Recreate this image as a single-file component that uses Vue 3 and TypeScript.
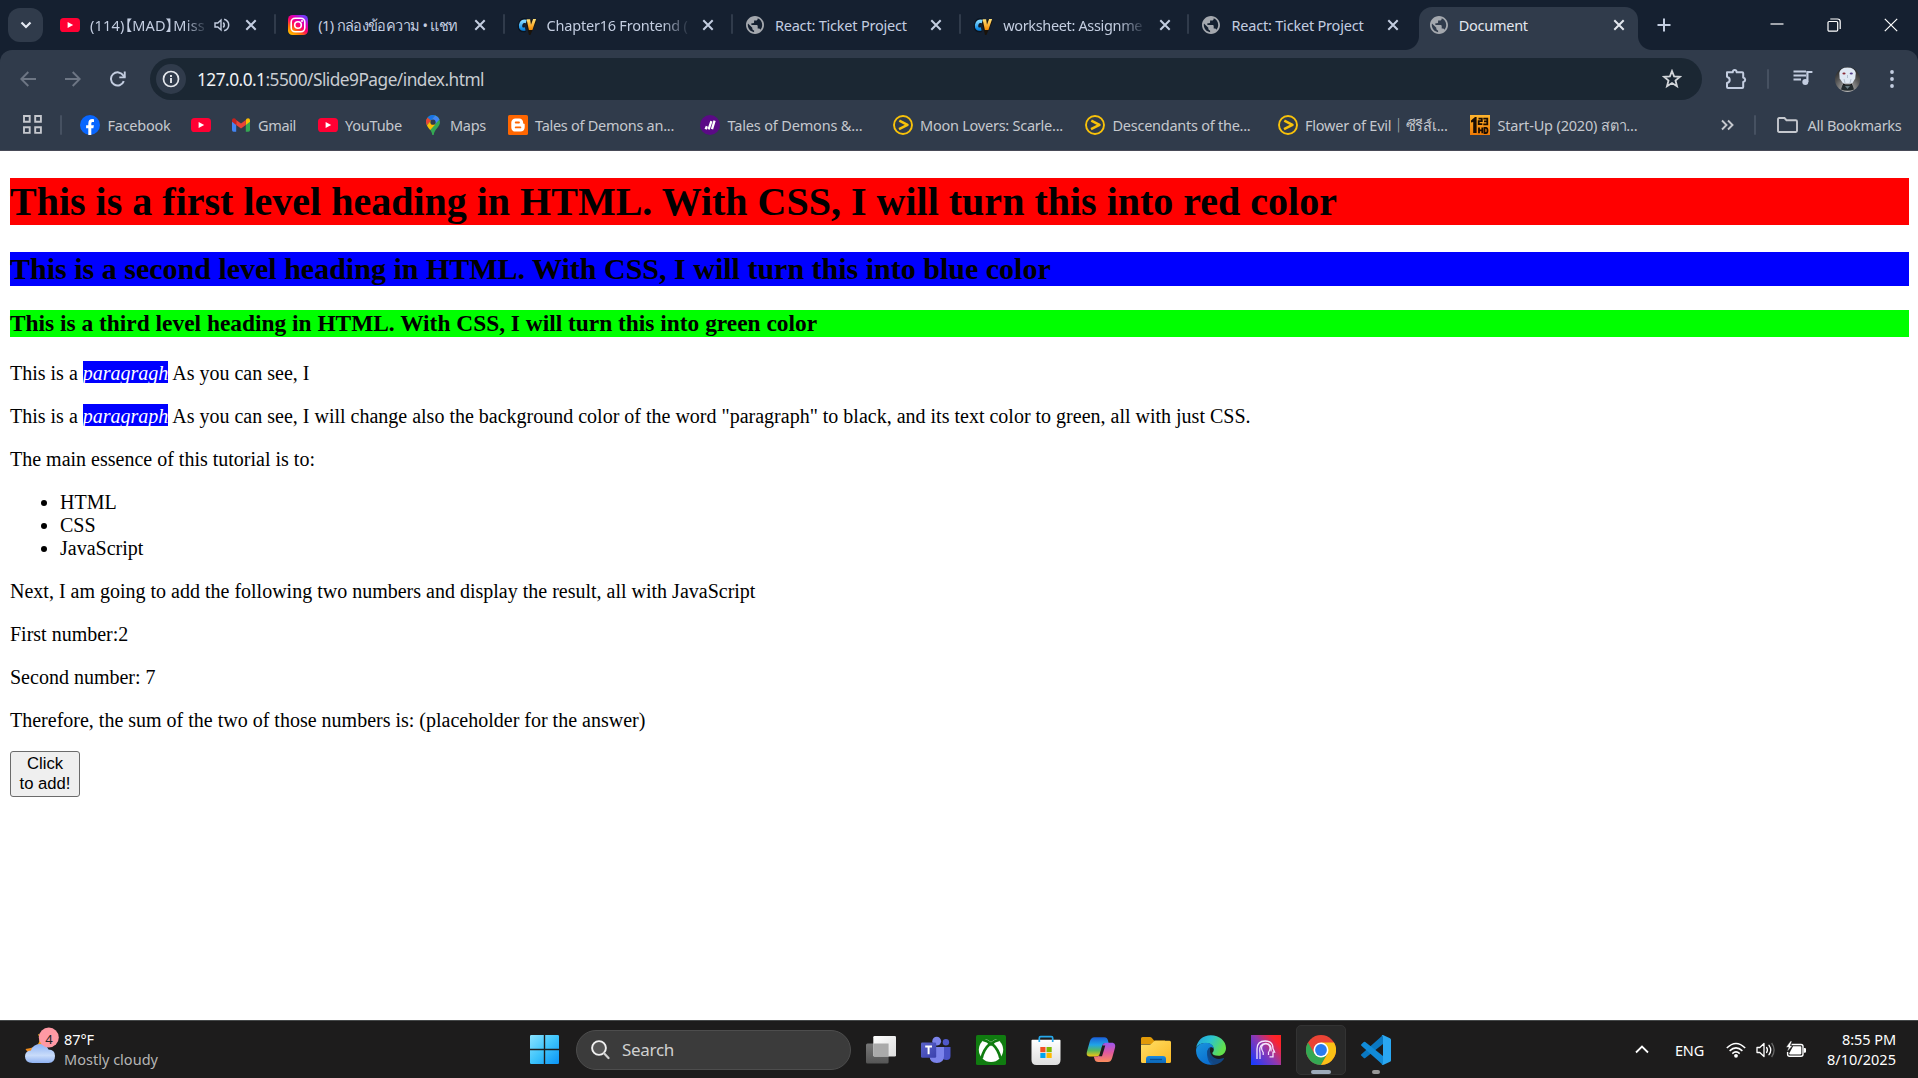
<script setup lang="ts">
import { ref } from 'vue'

interface Tab {
  icon: string
  title: string
  width: number
  audio?: boolean
  active?: boolean
  faded?: boolean
}

interface Bookmark {
  icon: string
  label: string
  width: number
  box: number
}

const tabs: Tab[] = [
  { icon: 'youtube', title: '(114)【MAD】Miss', width: 115, audio: true, faded: true },
  { icon: 'instagram', title: '(1) กล่องข้อความ • แชท', width: 138 },
  { icon: 'cv', title: 'Chapter16 Frontend (', width: 141, faded: true },
  { icon: 'globe', title: 'React: Ticket Project', width: 132 },
  { icon: 'cv', title: 'worksheet: Assignme', width: 139, faded: true },
  { icon: 'globe', title: 'React: Ticket Project', width: 132 },
  { icon: 'globe', title: 'Document', width: 69, active: true },
]

const bookmarks: Bookmark[] = [
  { icon: 'facebook', label: 'Facebook', width: 63, box: 63 },
  { icon: 'youtube', label: '', width: 0, box: 0 },
  { icon: 'gmail', label: 'Gmail', width: 38, box: 39.5 },
  { icon: 'youtube', label: 'YouTube', width: 57, box: 57.5 },
  { icon: 'maps', label: 'Maps', width: 36, box: 37.5 },
  { icon: 'blogger', label: 'Tales of Demons an...', width: 139, box: 145 },
  { icon: 'stripes', label: 'Tales of Demons &...', width: 135, box: 145 },
  { icon: 'viu', label: 'Moon Lovers: Scarle...', width: 143, box: 145 },
  { icon: 'viu', label: 'Descendants of the...', width: 138, box: 145 },
  { icon: 'viu', label: 'Flower of Evil｜ซีรีส์เ...', width: 142, box: 145 },
  { icon: 'hd', label: 'Start-Up (2020) สตา...', width: 140, box: 145 },
]

const apps = ['taskview', 'teams', 'xbox', 'store', 'copilot', 'explorer', 'edge', 'lens', 'chrome', 'vscode']

const first = ref(2)
const second = ref(7)
const answer = ref('(placeholder for the answer)')
const add = () => {
  answer.value = String(first.value + second.value)
}

// Tracks a label's letters so that it fills exactly the given width.
const vFit = {
  mounted(el: HTMLElement, binding: { value: number }) {
    const natural = el.getBoundingClientRect().width
    const count = Array.from(el.textContent ?? '').length
    if (count > 0 && binding.value > 0) {
      el.style.letterSpacing = `${(binding.value - natural) / count}px`
    }
  },
}
</script>

<template>
  <div class="screen">
    <svg class="defs" aria-hidden="true">
      <defs>
        <linearGradient id="gIg" x1="0" y1="1" x2="0.7" y2="0"><stop offset="0" stop-color="#ffd600" /><stop offset=".3" stop-color="#ff7a00" /><stop offset=".55" stop-color="#ff0169" /><stop offset=".8" stop-color="#d300c5" /><stop offset="1" stop-color="#7638fa" /></linearGradient>
        <linearGradient id="gC" x1="0" y1="0" x2="0" y2="1"><stop offset="0" stop-color="#7fd6ff" /><stop offset="1" stop-color="#0a86e0" /></linearGradient>
        <linearGradient id="gV" x1="0" y1="0" x2="0" y2="1"><stop offset="0" stop-color="#ffe27a" /><stop offset="1" stop-color="#f58a00" /></linearGradient>
        <linearGradient id="gHd" x1="0" y1="0" x2="0" y2="1"><stop offset="0" stop-color="#ffb52e" /><stop offset="1" stop-color="#f07a05" /></linearGradient>
        <linearGradient id="gWin" x1="0" y1="0" x2="1" y2="1"><stop offset="0" stop-color="#8be3ff" /><stop offset=".5" stop-color="#3ec4fb" /><stop offset="1" stop-color="#0a93f5" /></linearGradient>
        <linearGradient id="gCloud" x1="0" y1="0" x2="0" y2="1"><stop offset="0" stop-color="#8fb4f5" /><stop offset=".6" stop-color="#c9dcfa" /><stop offset="1" stop-color="#8fb2f2" /></linearGradient>
        <linearGradient id="gMoon" x1="0" y1="0" x2="0" y2="1"><stop offset="0" stop-color="#f5b915" /><stop offset="1" stop-color="#f08020" /></linearGradient>
        <linearGradient id="gTv" x1="0" y1="0" x2="1" y2="1"><stop offset="0" stop-color="#ffffff" /><stop offset="1" stop-color="#dcdcdc" /></linearGradient>
        <linearGradient id="gTb" x1="0" y1="0" x2="0" y2="1"><stop offset="0" stop-color="#777" /><stop offset="1" stop-color="#555" /></linearGradient>
        <linearGradient id="gTeam" x1="0" y1="0" x2="1" y2="1"><stop offset="0" stop-color="#5a62c8" /><stop offset="1" stop-color="#3a41ae" /></linearGradient>
        <linearGradient id="gStore" x1="0" y1="0" x2="0" y2="1"><stop offset="0" stop-color="#ffffff" /><stop offset="1" stop-color="#dedede" /></linearGradient>
        <linearGradient id="gCp1" x1="0" y1="0" x2="0" y2="1"><stop offset="0" stop-color="#1b5fd9" /><stop offset=".4" stop-color="#20a4e8" /><stop offset=".7" stop-color="#58b85c" /><stop offset="1" stop-color="#f2c511" /></linearGradient>
        <linearGradient id="gCp2" x1="0" y1="0" x2="0" y2="1"><stop offset="0" stop-color="#9b55f0" /><stop offset=".5" stop-color="#e0589f" /><stop offset="1" stop-color="#fb8d5c" /></linearGradient>
        <linearGradient id="gFold" x1="0" y1="0" x2="1" y2="1"><stop offset="0" stop-color="#ffdf66" /><stop offset="1" stop-color="#fcb823" /></linearGradient>
        <linearGradient id="gTray" x1="0" y1="0" x2="0" y2="1"><stop offset="0" stop-color="#1c8be0" /><stop offset="1" stop-color="#0b67b8" /></linearGradient>
        <linearGradient id="gE1" x1="0" y1="0" x2="1" y2=".4"><stop offset="0" stop-color="#1f9fe0" /><stop offset=".5" stop-color="#2bc4cf" /><stop offset="1" stop-color="#62e04c" /></linearGradient>
        <linearGradient id="gE2" x1="0" y1="0" x2=".5" y2="1"><stop offset="0" stop-color="#1a95dd" /><stop offset="1" stop-color="#0b6fd0" /></linearGradient>
        <linearGradient id="gLens" x1="0" y1=".9" x2="1" y2=".1"><stop offset="0" stop-color="#1a3bff" /><stop offset=".5" stop-color="#9038b0" /><stop offset=".85" stop-color="#fb2430" /><stop offset="1" stop-color="#ff2222" /></linearGradient>
        <radialGradient id="gAv" cx=".5" cy=".9" r=".9"><stop offset="0" stop-color="#c2c2c2" /><stop offset=".6" stop-color="#555" /><stop offset="1" stop-color="#222" /></radialGradient>
      </defs>

      <symbol id="youtube" viewBox="0 0 20 20"><rect x="0" y="3" width="20" height="14" rx="3.6" fill="#ff0033" /><path d="M7.6 7v6l5.600-3z" fill="#fff" /></symbol>
      <symbol id="instagram" viewBox="0 0 20 20"><rect width="20" height="20" rx="4.6" fill="url(#gIg)" /><rect x="3.2" y="3.2" width="13.6" height="13.6" rx="4" fill="none" stroke="#fff" stroke-width="1.6" /><circle cx="10" cy="10" r="3.3" fill="none" stroke="#fff" stroke-width="1.6" /><circle cx="14" cy="6" r="1" fill="#fff" /></symbol>
      <symbol id="cv" viewBox="0 0 20 20"><path d="M9.3 6.3Q4.6 4.7 3.6 10q-.6 5.600 4.600 4.200" fill="none" stroke="#0b1420" stroke-width="5.6" /><path d="M11.2 5.6l2 8.600 4-9" fill="none" stroke="#1a130a" stroke-width="5" /><path d="M9.3 6.500Q4.6 5.200 3.6 10q-.6 5.200 4.600 3.900" fill="none" stroke="url(#gC)" stroke-width="3.4" /><path d="M9.6 4.300h3.500l.9 5.400 2.100-5.600h3L15.400 15h-3.500z" fill="url(#gV)" /></symbol>
      <symbol id="globe" viewBox="0 0 20 20"><path transform="translate(-.8 -.8) scale(.9)" d="M12 2C6.480 2 2 6.480 2 12s4.480 10 10 10 10-4.480 10-10S17.520 2 12 2zm-1 17.930c-3.950-.49-7-3.850-7-7.930 0-.62.08-1.210.21-1.790L9 15v1c0 1.100.9 2 2 2v1.930zm6.900-2.540c-.26-.81-1-1.390-1.900-1.390h-1v-3c0-.55-.45-1-1-1H8v-2h2c.55 0 1-.45 1-1V7h2c1.100 0 2-.9 2-2v-.41c2.930 1.190 5 4.060 5 7.410 0 2.080-.8 3.970-2.100 5.390z" fill="#a4a8ae" /></symbol>
      <symbol id="x" viewBox="0 0 12 12"><path d="M1.300 1.300l9.400 9.400M10.700 1.300l-9.400 9.400" stroke="currentColor" stroke-width="2" /></symbol>
      <symbol id="audio" viewBox="0 0 16 14"><path d="M1 5v4h2.800L7 12V2L3.800 5z" fill="none" stroke="currentColor" stroke-width="1.400" /><path d="M9.300 4.500q2 2.500 0 5M10.200 1.200q4.500 1.500 4.500 5.800t-4.500 5.800" fill="none" stroke="currentColor" stroke-width="1.500" /></symbol>
      <symbol id="facebook" viewBox="0 0 20 20"><circle cx="10" cy="10" r="10" fill="#0866ff" /><path d="M8.300 20v-6.700H6.100v-3h2.200V8.700c0-3.300 1.600-4.600 4-4.600q1 0 1.700.2v2.800h-1.200c-1.200 0-1.500.6-1.500 1.700v1.500h2.600l-.5 3h-2.100V20z" fill="#fff" /></symbol>
      <symbol id="gmail" viewBox="0 0 20 20"><path d="M1 5.500V15q0 1.700 1.600 1.700h2.600V8.600z" fill="#4285f4" /><path d="M19 5.500V15q0 1.700-1.600 1.700h-2.600V8.600z" fill="#34a853" /><path d="M14.800 5v5L19 6.800V5.300c0-2-2-2.700-3.400-1.600z" fill="#fbbc04" /><path d="M5.200 10V5L10 8.500 14.800 5v5L10 13.600z" fill="#ea4335" /><path d="M1 5.300v1.500L5.200 10V5l-.8-1.300C3 2.600 1 3.300 1 5.300z" fill="#c5221f" /></symbol>
      <symbol id="maps" viewBox="0 0 20 20"><path d="M3 7a7 7 0 0 1 14 0c0 5-5.600 7-6.300 13H9.300C8.800 14 3 12 3 7z" fill="#34a853" /><path d="M4.600 2.600L8 5.600 4 10.500Q3 9 3 7q0-2.600 1.600-4.400z" fill="#ea4335" /><path d="M4.600 2.600A7 7 0 0 1 12.300.4L8 5.600z" fill="#1a73e8" /><path d="M12.300.4q3 1 4.200 4L12 9.300 8 5.600z" fill="#4285f4" /><path d="M4 10.500l4-4.900 4.200 3.800-5 5.700Q5 12.600 4 10.500z" fill="#fbbc04" /><circle cx="10" cy="7.200" r="2.600" fill="#303b4b" /></symbol>
      <symbol id="blogger" viewBox="0 0 20 20"><rect width="20" height="20" rx="1.600" fill="#ff6600" /><path d="M7.500 3.400h3.600c2.600 0 4 1.800 4 4 0 1 .3 1.200 1 1.300.5.100.6.500.6 1v2.600c0 2.600-1.800 4.300-4.200 4.300H7.500c-2.500 0-4.200-1.700-4.200-4.200V7.600c0-2.500 1.700-4.200 4.200-4.200z" fill="#fff" /><path d="M7.700 7.500H11M7.700 12.400h4.700" stroke="#ff6600" stroke-width="1.800" stroke-linecap="round" /></symbol>
      <symbol id="stripes" viewBox="0 0 20 20"><circle cx="10" cy="10" r="10" fill="#5b0a86" /><path d="M5.600 14.200l1.300-3M8.600 14.400l2.800-8.200M12 14.200l2.600-8.600" stroke="#fff" stroke-width="2.300" /></symbol>
      <symbol id="viu" viewBox="0 0 20 20"><circle cx="10" cy="10" r="9" fill="none" stroke="#f8c20a" stroke-width="1.900" /><path d="M6.300 5.600l8.200 4.300-8.500 4.300" fill="none" stroke="#f8c20a" stroke-width="2.500" stroke-linejoin="round" /></symbol>
      <symbol id="hd" viewBox="0 0 20 20"><rect width="20" height="20" fill="url(#gHd)" /><path d="M1 5.500L5 2h1.600v16H3.200V7L1 7.500z" fill="#1a0d02" /><path d="M8.500 3.600h3.300v2.600H8.700v3h3.600M13.300 3.600h4v5.700h-4M14 6.300h3M9 12.500v5.700M12.300 12.500v5.700M9 15.300h3.300M14.500 12.800v5.200h1.500q1.500 0 1.500-2.600t-1.500-2.600z" fill="none" stroke="#1a0d02" stroke-width="1.800" /></symbol>

      <symbol id="taskview" viewBox="0 0 30 30"><rect y="8.600" width="22.600" height="20" rx="1.500" fill="url(#gTb)" /><rect x="7.300" y="1" width="22.700" height="20.600" rx="1.300" fill="url(#gTv)" /><path d="M7.300 8.600h15.300v13H8.600q-1.300 0-1.300-1.300z" fill="#aaa" /></symbol>
      <symbol id="teams" viewBox="0 0 30 30"><circle cx="24.900" cy="7.300" r="3.200" fill="#4f58c9" /><path d="M21 12h8.500v9q0 4-4 4t-4.500-3z" fill="#4a53c5" /><circle cx="15.700" cy="6.200" r="4.400" fill="#7b83eb" /><path d="M8 12h15v9q0 7-7.200 7T8.600 21z" fill="#7b83eb" /><rect x="0" y="7.500" width="15.200" height="15.200" rx="1.300" fill="url(#gTeam)" /><path d="M4.200 11.500h6.800M7.600 11.500v7.800" stroke="#fff" stroke-width="2" /></symbol>
      <symbol id="xbox" viewBox="0 0 30 30"><rect width="30" height="30" rx="1.600" fill="#107c10" /><circle cx="15" cy="14.800" r="12.200" fill="#fff" /><path d="M8 3.800Q11.500 4 15 7q3.500-3 7-3.200L19 1.500h-8z" fill="#107c10" /><path d="M7 5q4.500.5 8 4.200Q18.500 5.500 23 5M14 8.800Q7.500 14.500 5.600 23.500M16 8.800Q22.500 14.500 24.400 23.500" fill="none" stroke="#107c10" stroke-width="2.700" /></symbol>
      <symbol id="store" viewBox="0 0 30 30"><path d="M.5 5.600q0-.8.8-.8h27.400q.8 0 .8.800V25q0 5-5 5h-19q-5 0-5-5z" fill="url(#gStore)" /><path d="M8.300 7V3q0-1.400 1.400-1.400h10.600Q21.700 1.600 21.700 3v4" fill="none" stroke="#27a8ea" stroke-width="1.700" /><path d="M9.300 12h5.200v5.200H9.300z" fill="#f25022" /><path d="M15.500 12h5.200v5.200h-5.200z" fill="#7fba00" /><path d="M9.300 18h5.200v5H9.300z" fill="#00a4ef" /><path d="M15.500 18h5.200v5h-5.200z" fill="#ffb900" /></symbol>
      <symbol id="copilot" viewBox="0 0 30 30"><path d="M8.500 2.200h9.700c2.600 0 3.300 1.600 3.800 3.300l.6 2.500h-3c-2.200 0-3 1.500-3.500 3.400l-1.600 6.300c-.7 2.600-2 3.700-4.500 3.700H3.500C.8 21.400.3 19 1 16.500L3.700 6.800c.9-3 2.200-4.600 4.800-4.600z" fill="url(#gCp1)" /><path d="M21.500 27h-9c-2.600 0-3.500-1.200-4-3l-.7-2.600h3c2 0 3-1.200 3.500-3l1.900-7c.7-2.500 1.900-3.600 4.300-3.600h5.300c3 0 3.900 2.200 3.200 4.900l-2.700 9.700c-.9 3-2 4.600-4.800 4.600z" fill="url(#gCp2)" /><path d="M16.300 10.500h3L16 21.300h-3z" fill="#1d1c1c" /></symbol>
      <symbol id="explorer" viewBox="0 0 30 30"><path d="M0 3.500Q0 2 1.500 2H9q1 0 1.700.8L13 5.500h11V9H0z" fill="#e19a08" /><path d="M0 9.500h8.500q1.300 0 2.300-1l1.700-1.700q1-1 2.200-1H28.500q1.500 0 1.500 1.500v19.200q0 1.500-1.500 1.500h-27q-1.500 0-1.500-1.500z" fill="url(#gFold)" /><path d="M5 28v-4q0-3 3-3h14q3 0 3 3v4z" fill="url(#gTray)" /><path d="M9 24.500h12" stroke="#074f96" stroke-width="1.300" /></symbol>
      <symbol id="edge" viewBox="0 0 30 30"><path d="M.2 13C1 5.500 7 .2 14.800.2 23.500.2 30 6 30 13c0 5-3.800 7.800-7.700 7.800-4 0-6-1.300-6-2.700 0-.8 1.500-1.200 1.500-3.900 0-3.200-3-6.200-8-6.200C5.500 8 1.500 9.500.2 13z" fill="url(#gE1)" /><path d="M.1 14.600C.5 10.500 5 7.700 9.800 7.700c5.500 0 8 3.500 8 6.300-.8-1.500-2.500-2-3.800-1.400-3.300 1.500-4 9.700 2 14 1.300 1 .6 3.200-1.200 3.200C6.600 29.800-.6 23.500.1 14.600z" fill="url(#gE2)" /><path d="M11 18c0-3 1.500-5 3.500-5.800-2 6 2.500 11.800 8.500 11.800 2 0 3.700-.8 4.300-1 .6-.1.800.4.500.9-2.300 3.600-6.700 6-11.800 6-3.200-2-5-6.500-5-11.900z" fill="#114a8b" opacity=".92" /></symbol>
      <symbol id="lens" viewBox="0 0 30 30"><path d="M0 0h30v30H0z" fill="url(#gLens)" /><path d="M6 24V14q0-8 8.300-8 7.700 0 7.700 7.500l1.600 3.700H22v4.600h-3.500" fill="none" stroke="#f3e4ff" stroke-width="1.300" /><path d="M9 24v-6.200M12.200 20v-2.500q-3.400-5.300.2-8 3-1.500 5.400.6 2.600 3-.3 7.400V20M9 18q-1.500-9.300 6-9.700 6 .4 5 8" fill="none" stroke="#f3e4ff" stroke-width="1.200" /></symbol>
      <symbol id="chrome" viewBox="0 0 30 30"><circle cx="15" cy="15" r="15" fill="#ea4335" /><path d="M2 7.500l6.500 11.250L15 15l6.500 3.750L15 30A15 15 0 0 1 2 7.500z" fill="#34a853" /><path d="M15 7.500h13A15 15 0 0 1 15 30l6.500-11.250z" fill="#fbc116" /><circle cx="15" cy="15" r="7.500" fill="#fff" /><circle cx="15" cy="15" r="5.900" fill="#2a7bf0" /></symbol>
      <symbol id="vscode" viewBox="0 0 30 30"><path d="M22 0v9L4.300 23q-.8.600-1.500 0L.4 20.800q-.8-.8 0-1.500z" fill="#0a78c2" /><path d="M22 30v-9L4.300 7q-.8-.6-1.500 0L.4 9.200q-.8.800 0 1.500z" fill="#118bd8" /><path d="M22 0l7 3.200q1 .5 1 1.500v20.600q0 1-1 1.500L22 30q-1 .2-1.500-.5 1.500.5 1.500-1.500V2q0-1.800-1.500-1.500Q21-.2 22 0z" fill="#2aa7f2" /></symbol>
      <symbol id="wifi" viewBox="0 0 20 16"><path d="M.8 6Q10-3 19.200 6M3.600 8.900q6.400-6 12.800 0M6.300 11.600q3.700-3.400 7.400 0" fill="none" stroke="#fff" stroke-width="1.500" /><circle cx="10" cy="13.800" r="1.900" fill="#fff" /></symbol>
      <symbol id="volume" viewBox="0 0 20 16"><path d="M1 5.500v5h2.800L8 14.500v-13L3.800 5.500z" fill="none" stroke="#fff" stroke-width="1.300" stroke-linejoin="round" /><path d="M10.600 5.500q1.800 2.500 0 5M13 3.300q3.500 4.700 0 9.400" fill="none" stroke="#fff" stroke-width="1.300" stroke-linecap="round" /><path d="M15.600 1q5 7 0 14" fill="none" stroke="#666" stroke-width="1.300" /></symbol>
      <symbol id="battery" viewBox="0 0 20 17"><path d="M5.500 3.500H15q2 0 2 2v7.700q0 2-2 2H3.600q-2 0-2-2V11" fill="none" stroke="#fff" stroke-width="1.400" /><path d="M7 5.300h7.500q.8 0 .8.800v6.500q0 .8-.8.800H4q-.8 0-.8-.8z" fill="#fff" /><path d="M17.800 7h1q1.200 0 1.200 1v2.700q0 1-1.200 1h-1z" fill="#fff" /><path d="M4.500 0L0 6.300h2.500L1 11l5.500-6.300H4.300L6 0z" fill="#fff" stroke="#1d1c1c" stroke-width=".5" /></symbol>
    </svg>

    <header class="strip">
      <div class="menu"><svg width="12" height="8" viewBox="0 0 12 8"><path d="M1.500 1.500L6 6l4.500-4.500" fill="none" stroke="#e4e9f2" stroke-width="2.200" /></svg></div>
      <div class="tabs">
        <div v-for="(tab, i) in tabs" :key="i" class="tab" :class="{ active: tab.active, bare: i >= 5 }">
          <svg class="fav"><use :href="'#' + tab.icon" /></svg>
          <div class="title" :class="{ faded: tab.faded, short: tab.audio }"><span v-fit="tab.width">{{ tab.title }}</span></div>
          <svg v-if="tab.audio" class="audio"><use href="#audio" /></svg>
          <svg class="close"><use href="#x" /></svg>
        </div>
      </div>
      <svg class="plus" width="14" height="14" viewBox="0 0 14 14"><path d="M7 .5v13M.5 7h13" stroke="#c3cde0" stroke-width="2" /></svg>
      <div class="window">
        <svg width="14" height="14" viewBox="0 0 14 14"><path d="M.5 6h13" stroke="#fff" stroke-width="1.200" /></svg>
        <svg width="14" height="14" viewBox="0 0 14 14"><rect x="1" y="3.500" width="9.700" height="9.700" rx="1.200" fill="none" stroke="#fff" stroke-width="1.200" /><path d="M3.300 1h7.200Q13.200 1 13.200 3.700V11" fill="none" stroke="#fff" stroke-width="1.200" /></svg>
        <svg width="14" height="14" viewBox="0 0 14 14"><path d="M.8.8l12.400 12.400M13.200.8L.8 13.200" stroke="#fff" stroke-width="1.200" /></svg>
      </div>
    </header>

    <div class="toolbar">
      <svg class="nav dim" viewBox="0 0 16 16"><path d="M16 8H1.500M8.300 1L1.300 8l7 7" fill="none" stroke="currentColor" stroke-width="1.900" /></svg>
      <svg class="nav dim" viewBox="0 0 16 16"><path d="M0 8h14.500M7.700 1l7 7-7 7" fill="none" stroke="currentColor" stroke-width="1.900" /></svg>
      <svg class="nav" viewBox="0 0 16 16"><path d="M13.800 10.200A6.600 6.600 0 1 1 13.300 4.600L14.800 6.200" fill="none" stroke="currentColor" stroke-width="2" /><path d="M15.700.5v6.700H9.300V5.400h4.500V.5z" fill="currentColor" /></svg>
      <div class="omnibox">
        <div class="info"><svg width="18" height="18" viewBox="0 0 18 18"><circle cx="9" cy="9" r="7.500" fill="none" stroke="#e3e6eb" stroke-width="1.700" /><path d="M9 8v5M9 5v1.900" stroke="#e3e6eb" stroke-width="1.900" /></svg></div>
        <span v-fit="287" class="url"><b>127.0.0.1</b>:5500/Slide9Page/index.html</span>
        <svg class="star" width="20" height="20" viewBox="0 0 20 20"><path d="M10 2l2.100 5.400 5.900.4-4.500 3.700 1.500 5.700-5-3.200-5 3.200 1.500-5.700L2 7.800l5.900-.4z" fill="none" stroke="#d3d6da" stroke-width="1.800" /></svg>
      </div>
      <svg class="ext" width="22" height="22" viewBox="0 0 22 22"><path d="M2 4.300h5.700q.3-2.300 2-2.300t2 2.300h5.500q1 0 1 1V9.500q2 .5 2 2.200t-2 2.200v5q0 1-1 1H3q-1 0-1-1v-4q2.700-.7 2.700-3T2 8.700z" fill="none" stroke="#c3cde0" stroke-width="2" stroke-linejoin="round" /></svg>
      <i class="bar" />
      <svg class="media" width="20" height="16" viewBox="0 0 20 16"><path d="M.5 1.500h12.500M.5 5.500h12.500M.5 9.500h7.500" stroke="#c3cde0" stroke-width="1.800" /><circle cx="12.300" cy="12" r="3" fill="#c3cde0" /><path d="M14.400 12V2h5" fill="none" stroke="#c3cde0" stroke-width="2.200" /></svg>
      <svg class="avatar" width="25" height="25" viewBox="0 0 25 25"><circle cx="12.500" cy="12.500" r="12.500" fill="url(#gAv)" /><path d="M4.300 6Q5 .4 12.500.4T20.800 6l-.6 5.500-3 5h-9l-3.500-5z" fill="#dfe8f3" /><path d="M8 16.500l2.500 1h4.500l2-1v3H8z" fill="#111" /><path d="M7.500 18h10l1.500 4.500q-6.500 2.500-13 0z" fill="#222a2d" /><path d="M10 19h5l-2.500 3z" fill="#697b80" /><ellipse cx="9" cy="6.500" rx="1.600" ry="1" fill="#8b2d38" /><ellipse cx="16.300" cy="6.500" rx="1.600" ry="1" fill="#554088" /><path d="M9 12l1 4M16 12l-1 4M12.500 8v3" stroke="#a5b2c3" stroke-width=".8" /></svg>
      <svg class="dots" width="4" height="18" viewBox="0 0 4 18"><circle cx="2" cy="2" r="1.900" fill="#c3cde0" /><circle cx="2" cy="9" r="1.900" fill="#c3cde0" /><circle cx="2" cy="16" r="1.900" fill="#c3cde0" /></svg>
    </div>

    <nav class="bookmarks">
      <svg class="grid" width="19" height="19" viewBox="0 0 19 19"><path d="M1 1h5.700v5.700H1zM12.200 1h5.700v5.700h-5.700zM1 12.200h5.700v5.700H1zM12.200 12.200h5.700v5.700h-5.700z" fill="none" stroke="#c5c8ce" stroke-width="1.900" /></svg>
      <i class="bar first" />
      <div v-for="(mark, i) in bookmarks" :key="i" class="mark">
        <svg class="fav"><use :href="'#' + mark.icon" /></svg>
        <div v-if="mark.label" class="label" :style="{ width: mark.box + 'px' }"><span v-fit="mark.width">{{ mark.label }}</span></div>
      </div>
      <svg class="more" width="13" height="12" viewBox="0 0 13 12"><path d="M1 1.500L5.500 6 1 10.500M7 1.500L11.500 6 7 10.500" fill="none" stroke="#c5c8ce" stroke-width="1.900" /></svg>
      <i class="bar last" />
      <svg class="folder" width="21" height="16" viewBox="0 0 21 16"><path d="M1 2.200Q1 1 2.200 1h5.300l2 2.200h9.300q1.200 0 1.200 1.200v9.400q0 1.200-1.200 1.200H2.200Q1 15 1 13.800z" fill="none" stroke="#c5c8ce" stroke-width="1.900" /></svg>
      <span v-fit="94" class="all">All Bookmarks</span>
    </nav>

    <main class="page">
      <h1><span v-fit="1327">This is a first level heading in HTML. With CSS, I will turn this into red color</span></h1>
      <h2>This is a second level heading in HTML. With CSS, I will turn this into blue color</h2>
      <h3>This is a third level heading in HTML. With CSS, I will turn this into green color</h3>
      <p>This is a <em>paragragh</em> As you can see, I</p>
      <p>This is a <em>paragraph</em> As you can see, I will change also the background color of the word "paragraph" to black, and its text color to green, all with just CSS.</p>
      <p>The main essence of this tutorial is to:</p>
      <ul>
        <li>HTML</li>
        <li>CSS</li>
        <li>JavaScript</li>
      </ul>
      <p>Next, I am going to add the following two numbers and display the result, all with JavaScript</p>
      <p>First number:{{ first }}</p>
      <p>Second number: {{ second }}</p>
      <p>Therefore, the sum of the two of those numbers is: {{ answer }}</p>
      <button type="button" @click="add">Click<br>to add!</button>
    </main>

    <footer class="taskbar">
      <div class="weather">
        <svg width="36" height="40" viewBox="0 0 36 40"><path d="M13 8q6 13-12.500 15Q4 30 14 27q10-5 5-14-2-4-6-5z" fill="url(#gMoon)" /><path d="M7.500 37Q0 36.500 0 30.500 0 25 6 24.500 8 18 15 18q6 0 8.500 5.500 6.500 0 6.500 6.500t-6.500 7z" fill="url(#gCloud)" /><circle cx="23.800" cy="11.500" r="10" fill="#ff99a4" /></svg>
        <b class="badge">4</b>
        <div class="forecast"><span v-fit="30" class="temp">87°F</span><span v-fit="94">Mostly cloudy</span></div>
      </div>
      <div class="center">
        <svg class="start" width="29" height="29" viewBox="0 0 29 29"><path d="M1.200 0H13.800V13.800H0V1.200Q0 0 1.200 0zM15.200 0h12.600Q29 0 29 1.200v12.600H15.200zM0 15.200h13.800V29H1.200Q0 29 0 27.800zM15.200 15.200H29v12.600q0 1.200-1.200 1.200H15.200z" fill="url(#gWin)" /></svg>
        <div class="search">
          <svg width="19" height="20" viewBox="0 0 19 20"><circle cx="8" cy="8" r="6.900" fill="#555" stroke="#f0f0f0" stroke-width="1.900" /><path d="M13 13.200l4.500 4.800" stroke="#d0d0d0" stroke-width="2.200" stroke-linecap="round" /></svg>
          <span v-fit="52">Search</span>
        </div>
        <div v-for="app in apps" :key="app" class="app" :class="app">
          <svg width="30" height="30"><use :href="'#' + app" /></svg>
        </div>
      </div>
      <div class="tray">
        <svg class="up" width="14" height="9" viewBox="0 0 14 9"><path d="M1 7.500L7 1.500l6 6" fill="none" stroke="#fff" stroke-width="1.800" /></svg>
        <span v-fit="29" class="lang">ENG</span>
        <svg class="wifi" width="20" height="16"><use href="#wifi" /></svg>
        <svg class="volume" width="20" height="16"><use href="#volume" /></svg>
        <svg class="battery" width="20" height="17"><use href="#battery" /></svg>
        <div class="clock"><span v-fit="54">8:55 PM</span><span v-fit="69">8/10/2025</span></div>
      </div>
    </footer>
  </div>
</template>

<style>
body {
  margin: 0;
  overflow: hidden;
}
</style>

<style scoped>
.screen {
  display: flex;
  flex-direction: column;
  width: 1918px;
  height: 1078px;
  overflow: hidden;
  background: #fff;
  font-family: "Noto Sans", "Open Sans", "Noto Sans CJK SC", sans-serif;
  font-size: 14.5px;
}
svg {
  display: block;
  flex: none;
}
.defs {
  position: absolute;
  width: 0;
  height: 0;
}
span {
  white-space: nowrap;
}
.strip {
  position: relative;
  z-index: 1;
  display: flex;
  flex: none;
  height: 50px;
  background: #152030;
  color: #c3cde0;
}
.menu {
  display: flex;
  align-items: center;
  justify-content: center;
  width: 35px;
  height: 34px;
  margin: 8px 4px 0 8px;
  border-radius: 12px;
  background: #303b4b;
}
.tabs {
  display: flex;
  width: 1598px;
  height: 50px;
}
.tab {
  position: relative;
  display: flex;
  align-items: center;
  width: 228.3px;
  height: 43px;
  margin-top: 7px;
  padding: 0 0 7px 13px;
  box-sizing: border-box;
}
.tab::after {
  content: "";
  position: absolute;
  right: -1px;
  top: 7px;
  width: 2px;
  height: 20px;
  border-radius: 1px;
  background: #303b4b;
}
.tab.bare::after {
  display: none;
}
.tab.active {
  width: 219px;
  margin-left: 2px;
  padding-left: 10px;
  border-radius: 13px 13px 0 0;
  background: #303b4b;
  color: #e3e7ee;
}
.tab.active::before,
.tab.active::after {
  content: "";
  display: block;
  position: absolute;
  top: auto;
  bottom: 0;
  width: 14px;
  height: 14px;
  border-radius: 0;
}
.tab.active::before {
  left: -14px;
  background: radial-gradient(circle at 0 0, transparent 13.5px, #303b4b 14.5px);
}
.tab.active::after {
  right: -14px;
  background: radial-gradient(circle at 100% 0, transparent 13.5px, #303b4b 14.5px);
}
.fav {
  width: 20px;
  height: 20px;
}
.title {
  width: 141px;
  margin-left: 10px;
  overflow: hidden;
  line-height: 24px;
  font-feature-settings: "palt";
}
.title span,
.label span {
  display: inline-block;
}
.title.short {
  width: 116px;
}
.title.faded {
  mask-image: linear-gradient(90deg, #000 82%, transparent 102%);
}
.audio {
  width: 16px;
  height: 14px;
  margin-left: 8px;
}
.close {
  width: 12px;
  height: 12px;
  margin-left: 14.5px;
}
.audio + .close {
  margin-left: 15px;
}
.active .close {
  margin-left: 13px;
}
.plus {
  margin: 18px 0 0 12px;
}
.window {
  display: flex;
  gap: 43px;
  margin: 18px 0 0 99px;
}
.toolbar {
  display: flex;
  flex: none;
  align-items: center;
  height: 50px;
  padding-top: 8px;
  padding-left: 20px;
  box-sizing: border-box;
  border-radius: 12px 12px 0 0;
  background: #303b4b;
  box-shadow: 0 -12px 0 12px #152030;
  color: #c3cde0;
}
.nav {
  width: 16px;
  height: 16px;
  margin-right: 29px;
}
.nav.dim {
  color: #6d7684;
}
.omnibox {
  display: flex;
  align-items: center;
  width: 1552px;
  height: 42px;
  margin-left: -5px;
  border-radius: 21px;
  background: #1b2733;
}
.info {
  display: flex;
  align-items: center;
  justify-content: center;
  width: 30px;
  height: 30px;
  margin-left: 6px;
  border-radius: 50%;
  background: #303b4b;
}
.url {
  margin-left: 11px;
  color: #c8ccd1;
  font-size: 17.3px;
}
.url b {
  color: #f0f2f5;
  font-weight: 400;
}
.star {
  margin-left: auto;
  margin-right: 20px;
}
.ext {
  margin-left: 23px;
}
.bar {
  flex: none;
  width: 2px;
  height: 20px;
  border-radius: 1px;
  background: #465161;
}
.ext + .bar {
  margin-left: 20px;
}
.media {
  margin: -2px 0 0 24px;
}
.avatar {
  margin-left: 22px;
}
.dots {
  margin-left: 30px;
}
.bookmarks {
  display: flex;
  flex: none;
  align-items: center;
  height: 51px;
  padding: 0 0 1px 23px;
  box-sizing: border-box;
  border-bottom: 1px solid #474a57;
  background: #303b4b;
  color: #c5c8ce;
}
.bar.first {
  margin: 0 18px 0 18px;
}
.mark {
  display: flex;
  align-items: center;
  margin-right: 20px;
}
.label {
  margin-left: 7.5px;
  line-height: 24px;
}
.more {
  margin-left: 58px;
}
.bar.last {
  margin-left: 20px;
}
.folder {
  margin-left: 21px;
}
.all {
  margin-left: 10px;
}
.page {
  flex: none;
  height: 869px;
  padding: 27px 9px 0 10px;
  box-sizing: border-box;
  background: #fff;
  color: #000;
  font: 20px/23px "Liberation Serif", "Times New Roman", serif;
}
h1 {
  margin: 0 0 27px;
  background: #f00;
  font-size: 40px;
  line-height: 47px;
}
h2 {
  margin: 0 0 24px;
  background: #00f;
  font-size: 30px;
  line-height: 34px;
}
h3 {
  margin: 0 0 25px;
  background: #0f0;
  font-size: 23.4px;
  line-height: 27px;
}
p {
  margin: 0 0 20px;
}
em {
  padding-top: 1px;
  background: linear-gradient(#00f, #00f) 0 0 / 100% 22px no-repeat;
  color: #fff;
}
ul {
  margin: 0 0 20px;
  padding-left: 50px;
}
button {
  display: block;
  width: 70px;
  height: 46px;
  margin-top: -1px;
  padding: 0;
  border: 1px solid #6b6b6b;
  border-radius: 3px;
  background: #efefef;
  color: #000;
  font: 16.67px/20px "Liberation Sans", Arial, sans-serif;
}
.taskbar {
  display: flex;
  flex: none;
  align-items: center;
  height: 58px;
  border-top: 1px solid #454849;
  box-sizing: border-box;
  background: #1d1c1c;
  color: #fff;
  line-height: 20px;
}
.weather {
  position: relative;
  display: flex;
  align-items: center;
  width: 505px;
  padding-left: 25px;
  box-sizing: border-box;
}
.weather svg {
  margin-top: -8px;
}
.badge {
  position: absolute;
  left: 39px;
  top: -2px;
  width: 20px;
  color: #222;
  font-size: 13px;
  font-weight: 400;
  text-align: center;
}
.forecast {
  display: flex;
  flex-direction: column;
  align-items: flex-start;
  margin: -2px 0 0 3px;
  color: #b5b5b5;
}
.forecast .temp {
  color: #fff;
}
.center {
  display: flex;
  align-items: center;
}
.start {
  margin-left: 25px;
}
.search {
  display: flex;
  align-items: center;
  width: 275px;
  height: 40px;
  margin: 0 13px 0 17px;
  padding-left: 14px;
  box-sizing: border-box;
  border: 1px solid #4d4d4d;
  border-radius: 20px;
  background: #3b3b3b;
  color: #d0d0d0;
  font-size: 17px;
}
.search span {
  margin-left: 12px;
}
.app {
  position: relative;
  display: flex;
  align-items: center;
  justify-content: center;
  width: 50px;
  height: 50px;
  margin-right: 5px;
  box-sizing: border-box;
}
.app:nth-child(3) {
  margin-left: -8px;
}
.app.chrome {
  border: 1px solid #333;
  border-radius: 5px;
  background: #292929;
}
.app.chrome::after,
.app.vscode::after {
  content: "";
  position: absolute;
  left: 50%;
  bottom: 0;
  width: 20px;
  height: 4px;
  border-radius: 2px;
  background: #9dabba;
  transform: translateX(-50%);
}
.app.vscode::after {
  bottom: 1px;
  width: 8px;
  background: #979797;
}
.tray {
  display: flex;
  align-items: center;
  margin-left: auto;
  padding-right: 22px;
}
.lang {
  margin-left: 26px;
}
.wifi {
  margin-left: 22px;
}
.volume,
.battery {
  margin-left: 10px;
}
.clock {
  display: flex;
  flex-direction: column;
  align-items: flex-end;
  width: 69px;
  margin: -2px 0 0 21px;
}
</style>
